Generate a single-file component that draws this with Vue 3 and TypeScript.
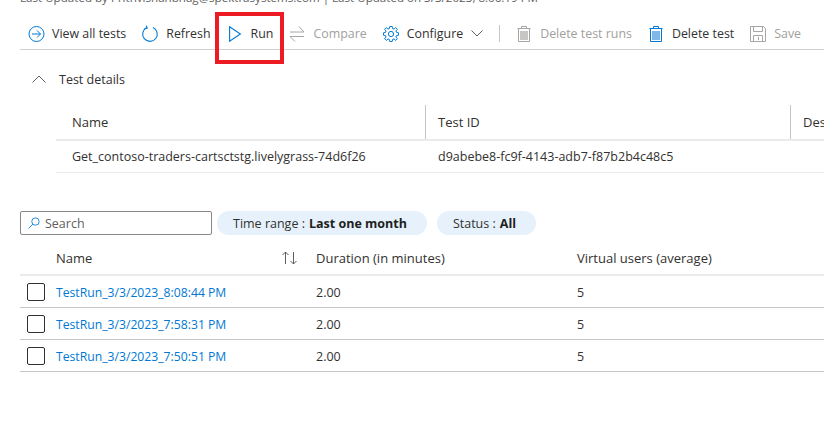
<script setup lang="ts">
interface Run {
  name: string;
  duration: string;
  users: number;
}

const runs: Run[] = [
  { name: 'TestRun_3/3/2023_8:08:44 PM', duration: '2.00', users: 5 },
  { name: 'TestRun_3/3/2023_7:58:31 PM', duration: '2.00', users: 5 },
  { name: 'TestRun_3/3/2023_7:50:51 PM', duration: '2.00', users: 5 },
];
</script>

<template>
  <div class="page">
    <div class="meta">
      <span>Last Updated by Prithvishanbhag@spektrasystems.com | Last Updated on 3/3/2023, 8:06:19 PM</span>
    </div>

    <div class="toolbar">
      <div class="tool">
        <svg class="icon" viewBox="0 0 16 16" fill="none" stroke="#0078d4" stroke-width="1">
          <circle cx="8.5" cy="8" r="7.5" />
          <path d="M4 8h8.500M9 4.500L12.500 8 9 11.500" />
        </svg>
        <span>View all tests</span>
      </div>
      <div class="tool">
        <svg class="icon" viewBox="0 0 16 16" fill="none" stroke="#0078d4" stroke-width="1.1">
          <path d="M11 1.400a7.300 7.300 0 1 1-6.300.1" />
          <path d="M4.200 -.4l1 2.500-2.600.6" />
        </svg>
        <span>Refresh</span>
      </div>
      <div class="tool">
        <svg class="icon" viewBox="0 0 16 16" fill="none" stroke="#0078d4" stroke-width="1.1">
          <path d="M2.600 .8l10.800 7.200-10.800 7.200z" />
        </svg>
        <span>Run</span>
      </div>
      <div class="tool disabled">
        <svg class="icon" viewBox="0 0 16 16" fill="none" stroke="#a8a6a4" stroke-width="1">
          <path d="M1 6h14L10 .5M15 10.500H1L6 15.500" />
        </svg>
        <span>Compare</span>
      </div>
      <div class="tool">
        <svg class="icon" viewBox="0 0 16 16" fill="none" stroke="#0078d4" stroke-width="1">
          <circle cx="8" cy="8" r="2.600" />
          <path d="M6.800 .5H9.200L9.600 2.500 11 3.100 12.700 1.600 14.400 3.300 12.900 5 13.500 6.400 15.500 6.800V9.200L13.500 9.600 12.900 11 14.400 12.700 12.700 14.400 11 12.900 9.600 13.500 9.200 15.500H6.800L6.400 13.500 5 12.900 3.300 14.400 1.600 12.700 3.100 11 2.500 9.600 .5 9.200V6.800L2.500 6.400 3.100 5 1.600 3.300 3.300 1.600 5 3.100 6.400 2.500z" />
        </svg>
        <span>Configure</span>
        <svg class="chevron" viewBox="0 0 12 7" fill="none" stroke="#605e5c" stroke-width="1">
          <path d="M.5 .5L6 6l5.500-5.500" />
        </svg>
      </div>
      <div class="divider"></div>
      <div class="tool disabled">
        <svg class="icon" viewBox="0 0 16 16" fill="none" stroke="#a8a6a4" stroke-width="1">
          <path d="M1.500 2.500h13M5.500 2.500V.5h5v2M2.500 2.500v13h11v-13" />
          <rect x="4" y="5" width="8" height="9" fill="#c8c6c4" stroke="none" />
        </svg>
        <span>Delete test runs</span>
      </div>
      <div class="tool">
        <svg class="icon" viewBox="0 0 16 16" fill="none" stroke="#0078d4" stroke-width="1">
          <path d="M1.500 2.500h13M5.500 2.500V.5h5v2M2.500 2.500v13h11v-13" />
          <rect x="4" y="5" width="8" height="9" fill="#7db8e8" stroke="none" />
        </svg>
        <span>Delete test</span>
      </div>
      <div class="tool disabled">
        <svg class="icon" viewBox="0 0 16 16" fill="none" stroke="#a8a6a4" stroke-width="1">
          <path d="M.5 .5h13l2 2v13H.5z" />
          <path d="M3.500 .5v5h9v-5M3.500 15.500v-6h9v6M8.500 11v3" />
        </svg>
        <span>Save</span>
      </div>
      <div class="run-highlight"></div>
    </div>

    <div class="details-head">
      <svg class="details-chevron" viewBox="0 0 14 8" fill="none" stroke="#605e5c" stroke-width="1">
        <path d="M.5 7.500L7 1l6.500 6.500" />
      </svg>
      <span>Test details</span>
    </div>

    <div class="details">
      <div class="details-row details-header">
        <div class="cell">Name</div>
        <div class="cell sep">Test ID</div>
        <div class="cell sep">Description</div>
      </div>
      <div class="details-row details-body">
        <div class="cell">Get_contoso-traders-cartsctstg.livelygrass-74d6f26</div>
        <div class="cell body-id">d9abebe8-fc9f-4143-adb7-f87b2b4c48c5</div>
        <div class="cell"></div>
      </div>
    </div>

    <div class="filters">
      <div class="search">
        <svg class="search-icon" viewBox="0 0 14 14" fill="none" stroke="#0078d4" stroke-width="1">
          <circle cx="8.700" cy="5.300" r="4.300" />
          <path d="M5.600 8.400L.8 13.200" />
        </svg>
        <span>Search</span>
      </div>
      <div class="pill pill-time">Time range : <b>Last one month</b></div>
      <div class="pill">Status : <b>All</b></div>
    </div>

    <div class="runs">
      <div class="run-row run-header">
        <div class="check-col"></div>
        <div class="name-col">
          <span>Name</span>
          <svg class="sort" viewBox="0 0 17 14" fill="none" stroke="#605e5c" stroke-width="1">
            <path d="M4.500 13V1M1.500 4l3-3 3 3M12.500 1v12M9.500 10l3 3 3-3" />
          </svg>
        </div>
        <div class="duration-col">Duration (in minutes)</div>
        <div>Virtual users (average)</div>
      </div>
      <div v-for="run in runs" :key="run.name" class="run-row">
        <div class="check-col"><span class="checkbox"></span></div>
        <div class="name-col"><a class="run-link">{{ run.name }}</a></div>
        <div class="duration-col">{{ run.duration }}</div>
        <div>{{ run.users }}</div>
      </div>
    </div>
  </div>
</template>

<style>
html,
body {
  margin: 0;
  background: #fff;
  overflow: hidden;
}
</style>

<style scoped>
.page {
  width: 824px;
  height: 439px;
  overflow: hidden;
  background: #fff;
  color: #323130;
  font-family: "Open Sans", "Noto Sans", sans-serif;
  font-size: 12.5px;
}

.meta {
  height: 5px;
  padding-left: 20px;
  display: flex;
  align-items: flex-end;
  white-space: nowrap;
  color: #605e5c;
  font-size: 11.6px;
  overflow: hidden;
}

.toolbar {
  position: relative;
  height: 45px;
  margin: 0 0 0 20px;
  padding: 13px 0 0 8px;
  display: flex;
  align-items: center;
  gap: 16px;
  border-bottom: 1px solid #d2d0ce;
  box-sizing: border-box;
  white-space: nowrap;
  font-size: 12.4px;
}

.tool {
  display: flex;
  align-items: center;
  gap: 8px;
}

.tool.disabled {
  color: #a19f9d;
}

.icon {
  width: 16px;
  height: 16px;
  flex: none;
  overflow: visible;
}

.chevron {
  width: 12px;
  height: 7px;
}

.divider {
  width: 1px;
  height: 17px;
  background: #c8c6c4;
}

.run-highlight {
  position: absolute;
  left: 195px;
  top: 7px;
  width: 69px;
  height: 52px;
  box-sizing: border-box;
  border: 4px solid #ed1c24;
}

.details-head {
  height: 55px;
  padding: 3px 0 0 32px;
  display: flex;
  align-items: center;
  gap: 13px;
  box-sizing: border-box;
}

.details-chevron {
  width: 14px;
  height: 8px;
}

.details {
  margin-left: 56px;
}

.details-row {
  display: grid;
  grid-template-columns: 369px 365px 1fr;
}

.details-header {
  height: 36px;
  border-bottom: 2px solid #edebe9;
  box-sizing: border-box;
  font-size: 13px;
}

.details-header .cell {
  display: flex;
  align-items: center;
  padding-left: 16px;
}

.sep {
  border-left: 1px solid #c8c6c4;
  padding-left: 12px !important;
  white-space: nowrap;
  overflow: hidden;
}

.details-body {
  height: 32px;
  align-items: center;
  border-bottom: 1px solid #edebe9;
  box-sizing: border-box;
}

.details-body .cell {
  padding-left: 16px;
  white-space: nowrap;
}

.details-body .body-id {
  padding-left: 13px;
}

.filters {
  margin: 38px 0 0 20px;
  display: flex;
  align-items: center;
  gap: 5px;
}

.search {
  width: 192px;
  height: 24px;
  box-sizing: border-box;
  border: 1px solid #8a8886;
  border-radius: 2px;
  padding-left: 7px;
  display: flex;
  align-items: center;
  gap: 5px;
  color: #605e5c;
}

.search-icon {
  width: 12px;
  height: 12px;
}

.pill {
  height: 24px;
  padding: 0 20px 0 16px;
  display: flex;
  align-items: center;
  gap: 4px;
  border-radius: 12px;
  background: #e6f1fb;
  white-space: nowrap;
}

.pill-time {
  margin-right: 5px;
}

.pill b {
  font-weight: 700;
  color: #201f1e;
}

.runs {
  margin: 9px 0 0 20px;
}

.run-row {
  height: 32px;
  padding-top: 1px;
  display: flex;
  align-items: center;
  border-bottom: 1px solid #c8c6c4;
  box-sizing: border-box;
}

.run-row.run-header {
  border-bottom: 2px solid #edebe9;
  font-size: 13px;
  padding: 0 0 2px;
}

.check-col {
  width: 36px;
  flex: none;
  display: flex;
  align-items: center;
}

.checkbox {
  width: 18px;
  height: 18px;
  margin: 0 0 1px 7px;
  box-sizing: border-box;
  border: 1px solid #323130;
  border-radius: 2px;
}

.name-col {
  width: 260px;
  flex: none;
  display: flex;
  align-items: center;
  justify-content: space-between;
  padding-right: 18px;
  box-sizing: border-box;
}

.sort {
  width: 17px;
  height: 14px;
}

.duration-col {
  width: 261px;
  flex: none;
}

.run-link {
  color: #0078d4;
  font-size: 12.2px;
}
</style>
